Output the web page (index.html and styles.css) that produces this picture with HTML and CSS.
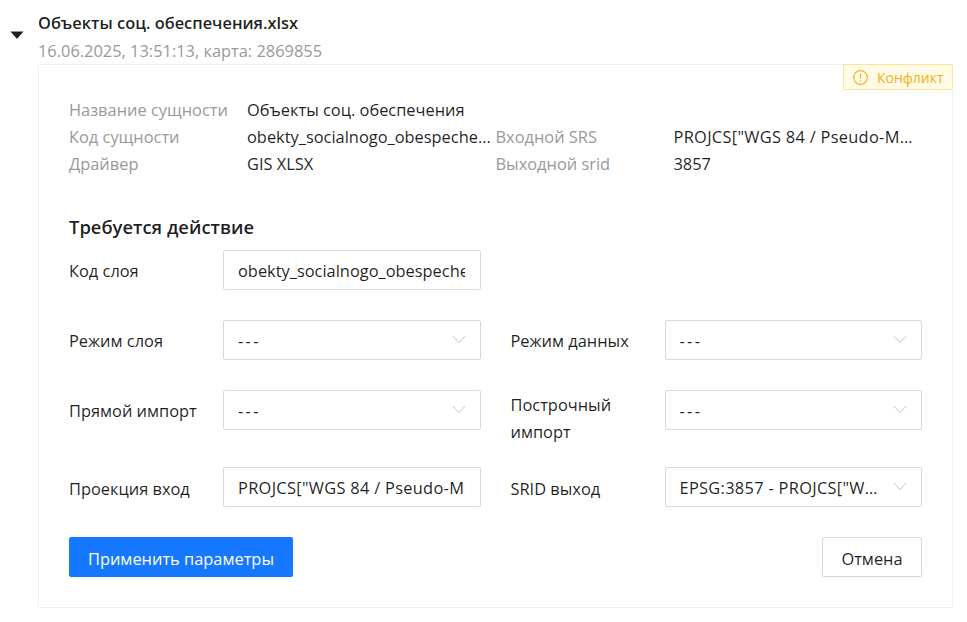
FILE: index.html
```html
<!DOCTYPE html>
<html lang="ru">
<head>
<meta charset="utf-8">
<title>Объекты соц. обеспечения</title>
<link rel="stylesheet" href="styles.css">
</head>
<body>
<div class="item">
  <svg class="caret" width="14" height="8" viewBox="0 0 14 8"><path d="M0.5 0.5H13.5L7.6 7.3Q7 8 6.4 7.3Z" fill="#1f1f1f"/></svg>
  <div class="main">
    <div class="title">Объекты соц. обеспечения.xlsx</div>
    <div class="date">16.06.2025, 13:51:13, карта: 2869855</div>
    <section class="card">
      <div class="badge">
        <svg width="15" height="15" viewBox="0 0 15 15" fill="none"><circle cx="7.5" cy="7.5" r="6.9" stroke="#faad14" stroke-width="1.1"/><path d="M7.5 3.8V8.8M7.5 10V11.1" stroke="#faad14" stroke-width="1.1"/></svg>
        <span>Конфликт</span>
      </div>
      <div class="meta">
        <div class="pair"><span class="key">Название сущности</span><span class="val">Объекты соц. обеспечения</span></div>
        <div class="pair"></div>
        <div class="pair"><span class="key">Код сущности</span><span class="val">obekty_socialnogo_obespecheniya</span></div>
        <div class="pair"><span class="key">Входной SRS</span><span class="val latin">PROJCS["WGS 84 / Pseudo-Mercator",GEOGCS</span></div>
        <div class="pair"><span class="key">Драйвер</span><span class="val">GIS XLSX</span></div>
        <div class="pair"><span class="key">Выходной srid</span><span class="val">3857</span></div>
      </div>
      <h3 class="heading">Требуется действие</h3>
      <form class="form">
        <div class="row">
          <div class="field"><label class="label">Код слоя</label><input class="control input" value="obekty_socialnogo_obespecheniya"></div>
        </div>
        <div class="row">
          <div class="field"><label class="label">Режим слоя</label><div class="control select"><span class="sel-text dashes">---</span><svg class="chev" width="14" height="9" viewBox="0 0 14 9"><path d="M0.8 1L7 7.6L13.2 1" fill="none" stroke="#c4c4c4" stroke-width="1"/></svg></div></div>
          <div class="field"><label class="label">Режим данных</label><div class="control select"><span class="sel-text dashes">---</span><svg class="chev" width="14" height="9" viewBox="0 0 14 9"><path d="M0.8 1L7 7.6L13.2 1" fill="none" stroke="#c4c4c4" stroke-width="1"/></svg></div></div>
        </div>
        <div class="row row-tall">
          <div class="field"><label class="label">Прямой импорт</label><div class="control select"><span class="sel-text dashes">---</span><svg class="chev" width="14" height="9" viewBox="0 0 14 9"><path d="M0.8 1L7 7.6L13.2 1" fill="none" stroke="#c4c4c4" stroke-width="1"/></svg></div></div>
          <div class="field"><label class="label label-wrap">Построчный импорт</label><div class="control select"><span class="sel-text dashes">---</span><svg class="chev" width="14" height="9" viewBox="0 0 14 9"><path d="M0.8 1L7 7.6L13.2 1" fill="none" stroke="#c4c4c4" stroke-width="1"/></svg></div></div>
        </div>
        <div class="row">
          <div class="field"><label class="label label-low">Проекция вход</label><input class="control input latin" value='PROJCS["WGS 84 / Pseudo-Mercator",GEOGCS'></div>
          <div class="field"><label class="label label-low">SRID выход</label><div class="control select"><span class="sel-text latin">EPSG:3857 - PROJCS["WGS 84 / Pseudo-Mercator"</span><svg class="chev" width="14" height="9" viewBox="0 0 14 9"><path d="M0.8 1L7 7.6L13.2 1" fill="none" stroke="#c4c4c4" stroke-width="1"/></svg></div></div>
        </div>
        <div class="actions">
          <button type="button" class="btn btn-primary">Применить параметры</button>
          <button type="button" class="btn btn-default">Отмена</button>
        </div>
      </form>
    </section>
  </div>
</div>
</body>
</html>
```
FILE: styles.css
```css
* { box-sizing: border-box; }
html, body { margin: 0; padding: 0; background: #fff; }
body {
  font-family: "Open Sans", "Noto Sans", sans-serif;
  font-size: 16.4px;
  line-height: 27px;
  color: rgba(0, 0, 0, 0.88);
  overflow: hidden;
}
.item { display: flex; padding: 9px 14px 0 10px; }
.caret { flex: none; margin-top: 22px; margin-right: 14px; }
.main { flex: 1; min-width: 0; }
.title { font-weight: 600; height: 27px; }
.date { color: #999; height: 27px; padding-top: 1px; }
.card {
  position: relative;
  margin-top: 1px;
  height: 544px;
  border: 1px solid #f0f0f0;
  border-radius: 2px;
  padding: 31px 30px 0;
}
.badge {
  position: absolute;
  top: -1px;
  right: -1px;
  width: 110px;
  height: 26px;
  display: flex;
  align-items: center;
  gap: 9px;
  padding-left: 9px;
  background: #fffbe6;
  border: 1px solid #ffe58f;
  border-radius: 2px;
  color: #faad14;
  font-size: 14px;
}
.meta { display: grid; grid-template-columns: 1fr 1fr; }
.pair { display: flex; min-width: 0; height: 27px; }
.key { flex: none; width: 178px; color: #999; }
.val { min-width: 0; flex: 1; white-space: nowrap; overflow: hidden; text-overflow: ellipsis; padding-right: 2px; }
.latin { letter-spacing: 0.3px; }
.dashes { letter-spacing: 2.3px; }
.heading { margin: 36px 0 10px; font-size: 18.4px; font-weight: 600; line-height: 27px; height: 27px; }
.row { display: grid; grid-template-columns: 1fr 1fr; gap: 30px; margin-bottom: 30px; }
.row-tall { margin-bottom: 22px; }
.field { display: flex; min-width: 0; align-items: flex-start; }
.label { flex: none; width: 154px; padding-right: 14px; height: 40px; line-height: 42px; white-space: nowrap; }
.label-low { line-height: 44px; }
.label-wrap { white-space: normal; height: 55px; line-height: 27px; padding-top: 1px; }
.control {
  flex: 1;
  min-width: 0;
  height: 40px;
  border: 1px solid #d9d9d9;
  border-radius: 2px;
  background: #fff;
  padding: 0 15px 0 14px;
  font: inherit;
  color: inherit;
}
.input { outline: none; width: 100%; }
.input.latin { letter-spacing: 0.3px; }
.select { display: flex; align-items: center; gap: 12px; padding-right: 14px; }
.sel-text { flex: 1; min-width: 0; white-space: nowrap; overflow: hidden; text-overflow: ellipsis; }
.chev { flex: none; margin-top: -1px; }
.actions { display: flex; justify-content: space-between; }
.btn { height: 40px; border-radius: 2px; font: inherit; padding: 2px 0 0; box-shadow: 0 1px 1px rgba(0,0,0,.03); }
.btn-primary { width: 224px; background: #1677ff; color: #fff; border: 0; }
.btn-default { width: 100px; background: #fff; border: 1px solid #d9d9d9; color: inherit; }
```
